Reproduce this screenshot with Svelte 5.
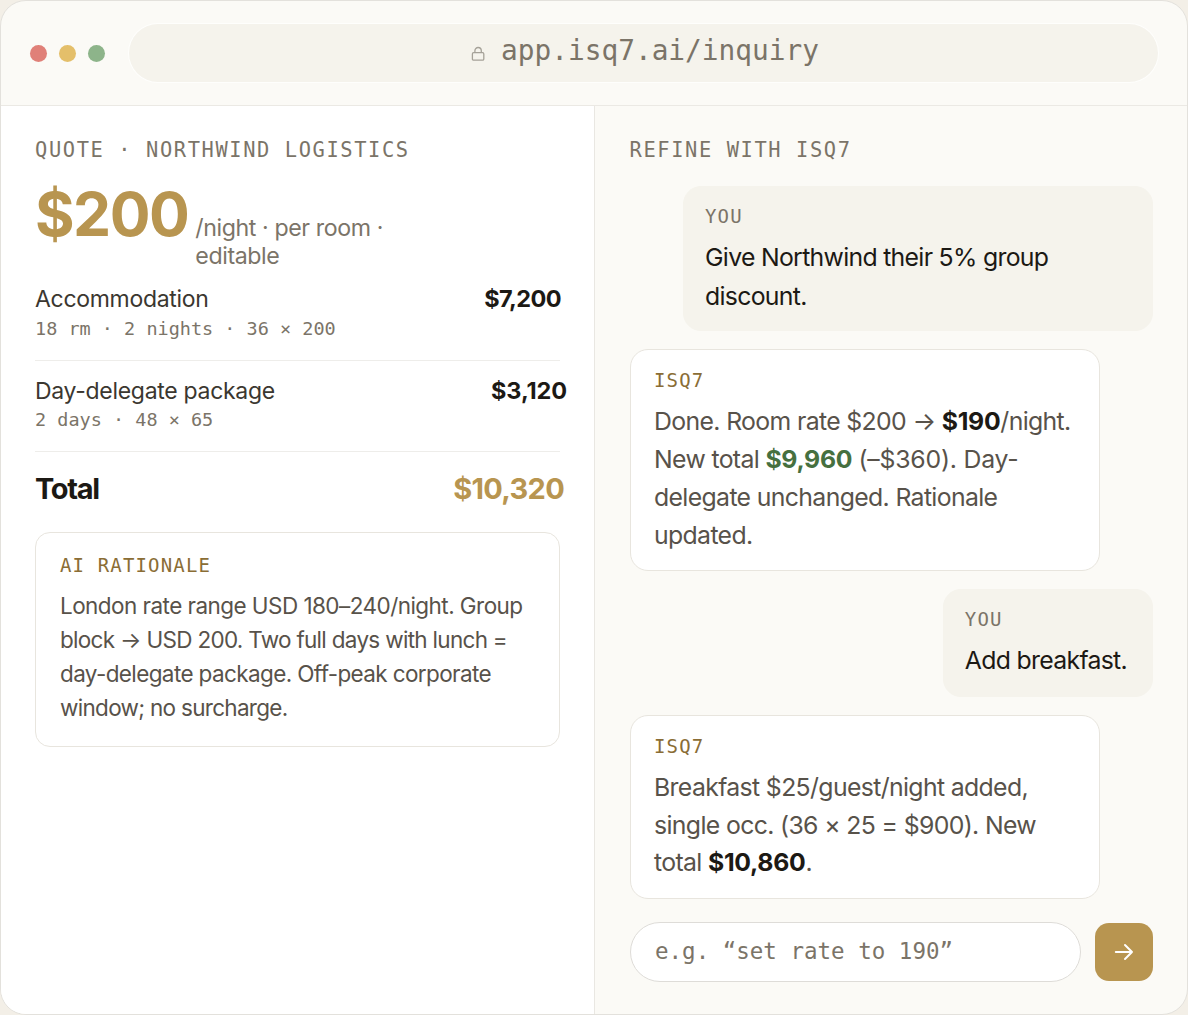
<script>
  const lines = [
    { id: 'rooms', name: 'Accommodation', detail: '18 rm · 2 nights · 36 × 200', amount: '$7,200' },
    { id: 'days', name: 'Day-delegate package', detail: '2 days · 48 × 65', amount: '$3,120' }
  ];
</script>

<div class="window">
  <header class="bar">
    <div class="dots">
      <span class="dot red"></span>
      <span class="dot amber"></span>
      <span class="dot green"></span>
    </div>
    <div class="address">
      <svg class="lock" viewBox="0 0 14 16" width="14" height="16" fill="none" stroke="#a5a198" stroke-width="1.3">
        <rect x="1.4" y="6.7" width="11.4" height="7.4" rx="1.2" />
        <path d="M3.9 6.7V4.7a3.2 3.2 0 0 1 6.4 0v2" />
      </svg>
      <span class="url">app.isq7.ai/inquiry</span>
    </div>
  </header>

  <div class="panes">
    <section class="quote">
      <div class="heading">QUOTE · NORTHWIND LOGISTICS</div>
      <div class="rate">
        <span class="price">$200</span>
        <span class="unit">/night · per room ·<br />editable</span>
      </div>

      {#each lines as line (line.id)}
        <div class="line {line.id}">
          <div>
            <div class="name">{line.name}</div>
            <div class="detail">{line.detail}</div>
          </div>
          <div class="amount">{line.amount}</div>
        </div>
      {/each}

      <div class="total">
        <span class="total-name">Total</span>
        <span class="total-amount">$10,320</span>
      </div>

      <div class="rationale">
        <div class="tag gold">AI RATIONALE</div>
        <p><span class="range">London rate range USD 180–240/night. Group</span><br /><span class="block">block → USD 200. Two full days with lunch =</span><br />day-delegate package. Off-peak corporate<br /><span class="block">window; no surcharge.</span></p>
      </div>
    </section>

    <section class="refine">
      <div class="heading">REFINE WITH ISQ7</div>
      <div class="chat">
        <div class="msg you wide">
          <div class="tag">YOU</div>
          <p>Give Northwind their 5% group<br />discount.</p>
        </div>
        <div class="msg bot">
          <div class="tag gold">ISQ7</div>
          <p>Done. Room rate $200 → <b>$190</b>/night.<br />New total <b class="saved">$9,960</b> <span class="delta">(–$360). Day-</span><br />delegate unchanged. Rationale<br />updated.</p>
        </div>
        <div class="msg you">
          <div class="tag">YOU</div>
          <p>Add breakfast.</p>
        </div>
        <div class="msg bot">
          <div class="tag gold">ISQ7</div>
          <p>Breakfast $25/guest/night added,<br />single occ. (36 × 25 = $900). New<br />total <b>$10,860</b>.</p>
        </div>
      </div>
      <div class="composer">
        <div class="field">e.g. “set rate to 190”</div>
        <button class="send" aria-label="Send">
          <svg viewBox="0 0 20 18" width="20" height="18" fill="none" stroke="#fff" stroke-width="2" stroke-linecap="round" stroke-linejoin="round">
            <path d="M1.8 9H18M11 2l7 7-7 7" />
          </svg>
        </button>
      </div>
    </section>
  </div>
</div>

<style>
  :global(body) {
    background: #f3efe7;
  }

  .window {
    box-sizing: border-box;
    width: 1188px;
    height: 1015px;
    display: flex;
    flex-direction: column;
    border: 1px solid #e3e1dc;
    border-radius: 26px;
    overflow: hidden;
    background: #fbfaf6;
    color: #1c1914;
    font-family: Inter, "Liberation Sans", sans-serif;
  }

  .bar {
    box-sizing: border-box;
    height: 105px;
    display: flex;
    align-items: center;
    gap: 24px;
    padding: 0 29px;
    border-bottom: 1px solid #ebe9e4;
  }

  .dots {
    display: flex;
    gap: 12px;
  }

  .dot {
    width: 17px;
    height: 17px;
    border-radius: 50%;
  }

  .red { background: #e08078; }
  .amber { background: #e4bf6a; }
  .green { background: #8db48a; }

  .address {
    box-sizing: border-box;
    flex: 1;
    height: 58px;
    display: flex;
    align-items: center;
    justify-content: center;
    gap: 16px;
    padding-left: 3px;
    border-radius: 29px;
    background: #f5f3ec;
    box-shadow: 0 0 0 1px #fefefc;
  }

  .lock { margin-top: 1px; }

  .url {
    padding-bottom: 4px;
    color: #7b7468;
  }

  .url, .heading, .detail, .tag, .field {
    font-family: "DejaVu Sans Mono", monospace;
    white-space: nowrap;
  }

  .url {
    font-size: 27.8px;
    line-height: 36px;
  }

  .panes {
    flex: 1;
    display: grid;
    grid-template-columns: 593px 1fr;
  }

  .quote {
    padding: 30px 34px 0;
    background: #fff;
  }

  .refine {
    padding: 30px 34px 0 35px;
    border-left: 1px solid #e9e7e2;
  }

  .heading {
    font-size: 20.4px;
    line-height: 28px;
    letter-spacing: 1.6px;
    color: #7b7468;
  }

  .refine .heading { margin-left: -0.5px; }

  .rate {
    display: flex;
    align-items: baseline;
    gap: 7px;
    height: 101px;
    margin-top: 19px;
  }

  .price {
    font-size: 60.5px;
    line-height: 62px;
    font-weight: 700;
    letter-spacing: -1.5px;
    color: #b89550;
  }

  .unit {
    font-size: 23.2px;
    line-height: 28px;
    letter-spacing: -0.42px;
    color: #7b7468;
    white-space: nowrap;
  }

  .line {
    box-sizing: border-box;
    height: 91px;
    width: 525px;
    display: flex;
    justify-content: space-between;
    padding-top: 15px;
    border-bottom: 1px solid #eeedea;
  }

  .rooms {
    height: 77px;
    padding-top: 0;
  }

  .name {
    font-size: 23px;
    line-height: 30px;
    letter-spacing: -0.3px;
    color: #3b3730;
  }

  .detail {
    font-size: 18.5px;
    line-height: 28px;
    color: #7b7468;
  }

  .rooms .detail { padding-top: 1px; }

  .amount {
    font-size: 23.5px;
    line-height: 30px;
    font-weight: 700;
    letter-spacing: -0.6px;
    margin-right: -1px;
  }

  /* amounts hang slightly past the rule */
  .days .amount {
    margin-right: -7px;
    letter-spacing: -0.1px;
  }

  .total {
    display: flex;
    justify-content: space-between;
    margin: 19px -4px 0 0;
    font-size: 29px;
    line-height: 36px;
    font-weight: 700;
  }

  .total-name { letter-spacing: -1.3px; }

  .total-amount {
    letter-spacing: -0.7px;
    color: #b89550;
  }

  .rationale {
    box-sizing: border-box;
    width: 525px;
    height: 215px;
    margin-top: 25px;
    padding: 20px 24px;
    border: 1px solid #e8e5de;
    border-radius: 15px;
  }

  .tag {
    font-size: 19px;
    line-height: 24px;
    letter-spacing: 1.15px;
    color: #7b7468;
  }

  .gold { color: #8a6d35; }

  p {
    margin: 0;
    white-space: nowrap;
  }

  .rationale p {
    margin-top: 12px;
    font-size: 22.5px;
    line-height: 34px;
    letter-spacing: -0.62px;
    color: #58524a;
  }

  .range { letter-spacing: -0.55px; }
  .block { letter-spacing: -0.7px; }

  .chat {
    display: flex;
    flex-direction: column;
    gap: 18px;
    margin-top: 22px;
  }

  .msg {
    box-sizing: border-box;
    border: 1px solid #e8e5de;
    border-radius: 18px;
    padding: 18px 23px 16px;
  }

  .msg p {
    margin-top: 10px;
    font-size: 24.8px;
    line-height: 38px;
    letter-spacing: -0.64px;
    color: #58524a;
  }

  .bot {
    width: 470px;
    background: #fff;
  }

  .bot:last-child p {
    margin-top: 11px;
    line-height: 37.6px;
  }

  .you {
    align-self: flex-end;
    padding: 17px 25px 17px 21px;
    border-color: #f5f3ec;
    background: #f5f3ec;
  }

  .wide {
    width: 470px;
    padding-bottom: 15px;
  }

  .you p {
    letter-spacing: -0.69px;
    color: #1c1914;
  }

  .wide p { line-height: 38.5px; }

  .msg b {
    font-weight: 700;
    letter-spacing: -0.3px;
    color: #1c1914;
  }

  .msg .saved { color: #46703f; }

  .delta { letter-spacing: -0.2px; }

  .composer {
    display: flex;
    align-items: center;
    gap: 14px;
    margin-top: 23px;
  }

  .field {
    box-sizing: border-box;
    width: 451px;
    height: 60px;
    padding: 0 24px;
    border: 1px solid #dedcd8;
    border-radius: 30px;
    background: #fff;
    font-size: 22.5px;
    line-height: 57px;
    color: #7b7468;
  }

  .send {
    width: 58px;
    height: 58px;
    display: flex;
    align-items: center;
    justify-content: center;
    padding: 0;
    border: 0;
    border-radius: 14px;
    background: #b89550;
  }
</style>
